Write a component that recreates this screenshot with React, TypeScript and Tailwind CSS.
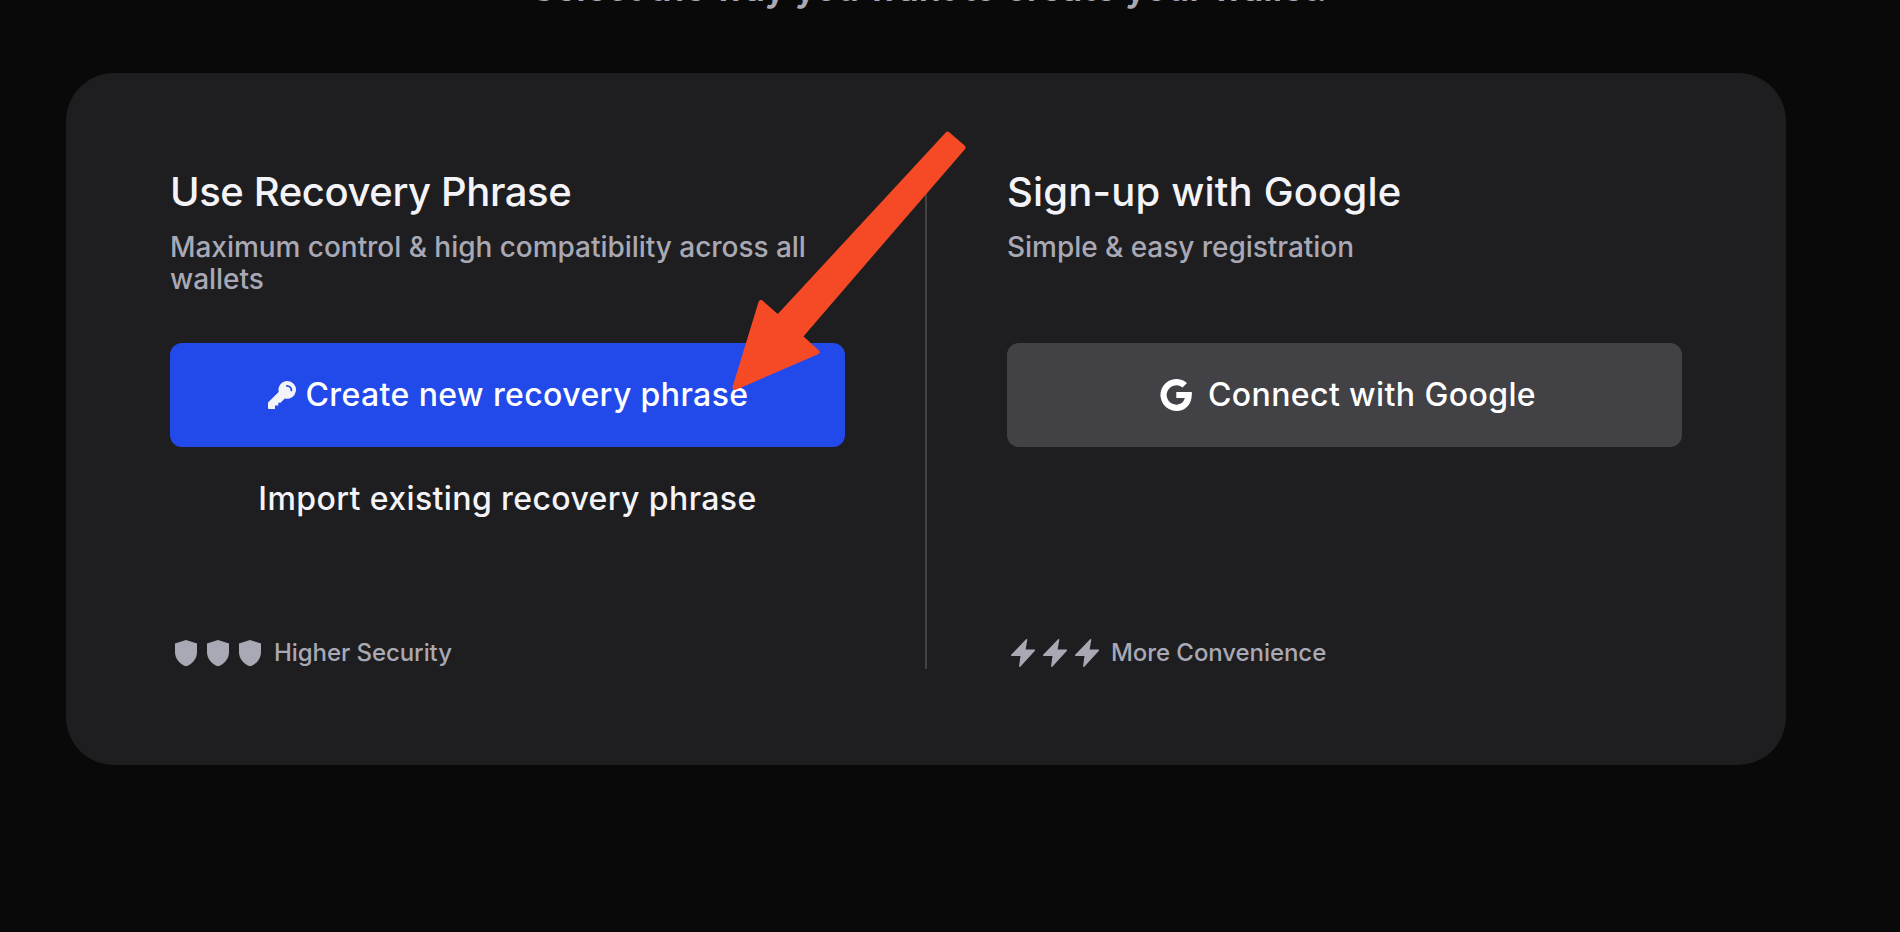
import React from "react";

function KeyIcon() {
  return (
    <svg viewBox="0 0 28 28" className="h-7 w-7 shrink-0" fill="#f4f4f8">
      <path fillRule="evenodd" d="M19.200 0a8.900 8.900 0 1 1-2.400 17.500L12.500 21.800h-2.200v2.700H7V28H0.800a.8.8 0 0 1-.8-.8V21.500L10.700 11A8.900 8.900 0 0 1 19.200 0Zm-.4 3.900a.8.8 0 0 0 0 1.800A3.700 3.700 0 0 1 22.500 9.400a.8.8 0 0 0 1.800 0 5.500 5.500 0 0 0-5.500-5.500Z" />
    </svg>
  );
}

function GoogleIcon() {
  return (
    <svg viewBox="0 0 32 32" className="h-8 w-8 shrink-0" fill="#fff">
      <path d="M16.300 13.100V19.100H24.800C24 22.800 20.900 25.700 16.300 25.700A9.700 9.700 0 1 1 22.500 8.500L27 4A16 16 0 1 0 16.300 32C25.700 32 32.600 25.200 31.800 13.100Z" />
    </svg>
  );
}

function ShieldIcon() {
  return (
    <svg viewBox="0 0 32 32" className="h-8 w-8" fill="#a9a9b5">
      <path d="M16 3 27 6.500V15C27 22 22 27.500 16 29.200 10 27.500 5 22 5 15V6.500Z" />
    </svg>
  );
}

function BoltIcon() {
  return (
    <svg viewBox="0 0 32 32" className="h-8 w-8" fill="#a9a9b5" stroke="#a9a9b5" strokeWidth="1.4" strokeLinejoin="round">
      <path d="M19.600 2.700 4.700 18.200H14.300L12.800 29.300 27.400 13.200H17.800Z" />
    </svg>
  );
}

const title = "text-[40px] leading-[48px] font-medium text-[#f4f4f8]";
const subtitle = "mt-[15px] h-16 text-[28px] leading-8 font-medium tracking-[-0.04px] text-[#a9a9b5]";
const button = "flex h-[104px] w-full items-center justify-center rounded-xl text-[32px] font-medium tracking-[0.4px]";
const note = "ml-2 text-2xl font-medium tracking-[-0.07px] text-[#a9a9b5]";

export default function App() {
  return (
    <main className="relative h-[932px] w-[1900px] overflow-hidden bg-[#090909] font-['Inter',sans-serif]">
      <div className="flex h-[73px] w-[1859px] items-start justify-center overflow-hidden">
        <p className="-mt-[37px] translate-y-[0.5px] text-[36px] leading-[48px] font-semibold tracking-[-0.04px] whitespace-nowrap text-[#a9a9b5]">
          Select the way you want to create your wallet.
        </p>
      </div>
      <section className="ml-[66px] flex h-[692px] w-[1720px] rounded-[48px] bg-[#1e1e20] px-[104px] pt-[95px] pb-24">
        <div className="flex w-[675px] flex-col">
          <h2 className={title + " tracking-[-0.4px]"}>Use Recovery Phrase</h2>
          <p className={subtitle}>Maximum control &amp; high compatibility across all wallets</p>
          <button className={button + " mt-12 gap-[9px] bg-[#224aeb] pl-0.5 text-white"}>
            <KeyIcon />
            <span>Create new recovery phrase</span>
          </button>
          <button className={button + " text-[#f4f4f8]"}>Import existing recovery phrase</button>
          <div className="mt-auto flex items-center">
            <ShieldIcon /><ShieldIcon /><ShieldIcon />
            <span className={note}>Higher Security</span>
          </div>
        </div>
        <div className="mx-20 w-0.5 shrink-0 bg-[#434345]" />
        <div className="flex w-[675px] flex-col">
          <h2 className={title + " tracking-[0.18px]"}>Sign-up with Google</h2>
          <p className={subtitle}>Simple &amp; easy registration</p>
          <button className={button + " mt-12 gap-4 bg-[#424146] pl-[7px] text-white"}>
            <GoogleIcon />
            <span>Connect with Google</span>
          </button>
          <div className="mt-auto flex items-center">
            <BoltIcon /><BoltIcon /><BoltIcon />
            <span className={note}>More Convenience</span>
          </div>
        </div>
      </section>
      <svg viewBox="0 0 420 290" className="absolute top-[120px] left-[560px] h-[290px] w-[420px]" fill="#f54a25" stroke="#f54a25" strokeWidth="5" strokeLinejoin="round">
        <path d="M387.600 14.200 403 27.500 240 216.500 257 232 175 267.500 201 182.500 218 197.500Z" />
      </svg>
    </main>
  );
}
